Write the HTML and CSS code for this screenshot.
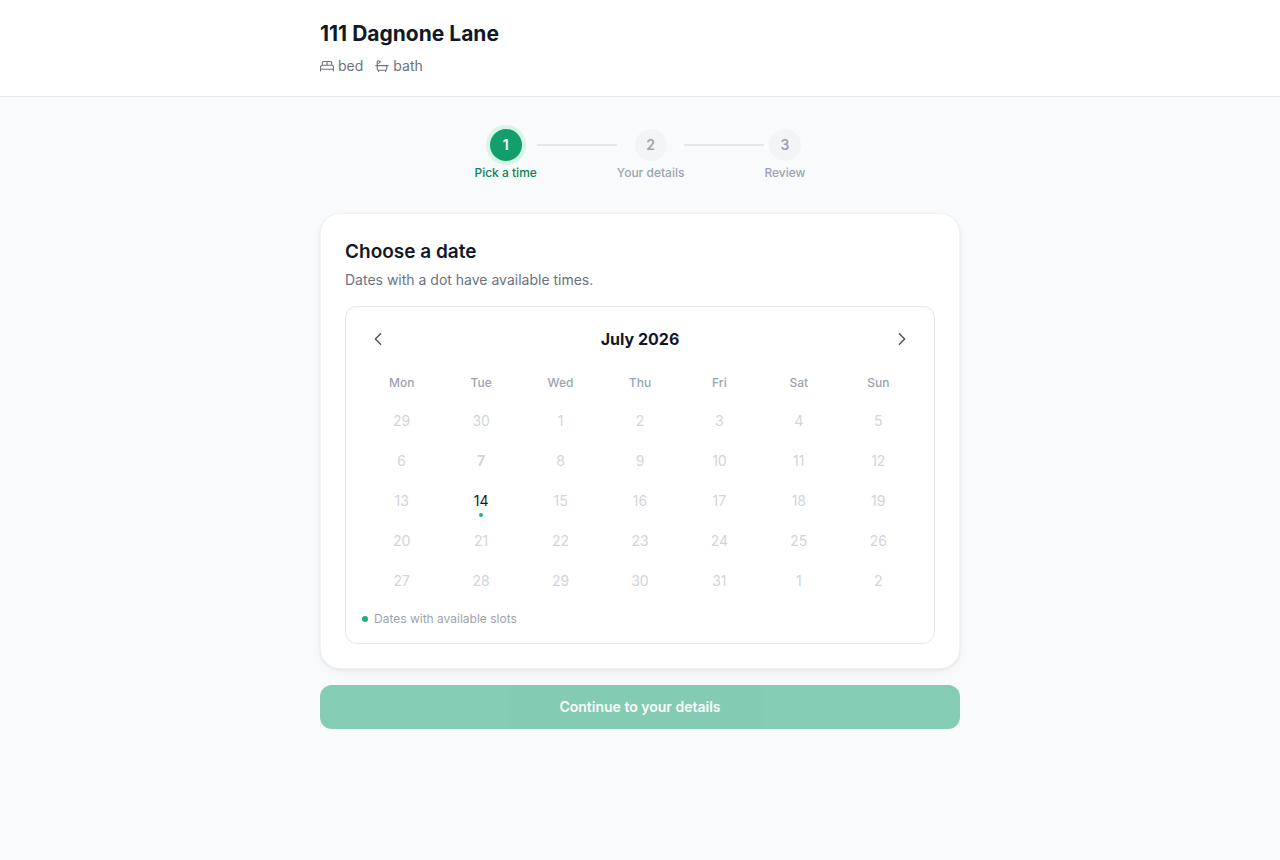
FILE: index.html
```
<!DOCTYPE html>
<html lang="en">
<head>
  <meta charset="UTF-8">
  <meta name="viewport" content="width=device-width, initial-scale=1.0">
  <title>111 Dagnone Lane</title>
  <link rel="stylesheet" href="styles.css">
</head>
<body>
  <header class="site-header">
    <div class="container">
      <h1 class="property-title">111 Dagnone Lane</h1>
      <div class="property-meta">
        <span class="meta-item">
          <svg class="meta-icon" viewBox="0 0 14 14" aria-hidden="true">
            <path d="M.6 12V7.8A1.5 1.5 0 0 1 2.1 6.3h9.8a1.5 1.5 0 0 1 1.5 1.5V12M.6 10.3h12.8M2.3 6.3V3.7a1.2 1.2 0 0 1 1.2-1.2h7a1.2 1.2 0 0 1 1.2 1.2v2.6M7 2.5v3.8"/>
          </svg>
          bed
        </span>
        <span class="meta-item">
          <svg class="meta-icon" viewBox="0 0 14 14" aria-hidden="true">
            <path d="M.8 6.6h12.4M2.2 6.6V2.8a1.1 1.1 0 0 1 2-.6l.6.8M3.7 4.3l1.8-1.6M2.2 6.6v3.2a1.5 1.5 0 0 0 1.5 1.5h6.6a1.5 1.5 0 0 0 1.5-1.5V6.6M3.5 11.3v1.2M10.5 11.3v1.2"/>
          </svg>
          bath
        </span>
      </div>
    </div>
  </header>

  <main class="container booking">
    <ol class="steps">
      <li class="step active" aria-current="step">
        <span class="step-number">1</span>
        <span class="step-label">Pick a time</span>
      </li>
      <li class="step-line" aria-hidden="true"></li>
      <li class="step">
        <span class="step-number">2</span>
        <span class="step-label">Your details</span>
      </li>
      <li class="step-line" aria-hidden="true"></li>
      <li class="step">
        <span class="step-number">3</span>
        <span class="step-label">Review</span>
      </li>
    </ol>

    <section class="card">
      <h2 class="card-title">Choose a date</h2>
      <p class="card-text">Dates with a dot have available times.</p>

      <div class="calendar">
        <div class="calendar-header">
          <button class="nav-button" type="button" aria-label="Previous month">
            <svg viewBox="0 0 24 24"><path d="M15.5 19l-7-7 7-7"/></svg>
          </button>
          <h3 class="month">July 2026</h3>
          <button class="nav-button" type="button" aria-label="Next month">
            <svg viewBox="0 0 24 24"><path d="M8.5 5l7 7-7 7"/></svg>
          </button>
        </div>

        <table class="days">
          <thead>
            <tr><th>Mon</th><th>Tue</th><th>Wed</th><th>Thu</th><th>Fri</th><th>Sat</th><th>Sun</th></tr>
          </thead>
          <tbody>
            <tr>
              <td><button class="day" disabled>29</button></td>
              <td><button class="day" disabled>30</button></td>
              <td><button class="day" disabled>1</button></td>
              <td><button class="day" disabled>2</button></td>
              <td><button class="day" disabled>3</button></td>
              <td><button class="day" disabled>4</button></td>
              <td><button class="day" disabled>5</button></td>
            </tr>
            <tr>
              <td><button class="day" disabled>6</button></td>
              <td><button class="day today" disabled>7</button></td>
              <td><button class="day" disabled>8</button></td>
              <td><button class="day" disabled>9</button></td>
              <td><button class="day" disabled>10</button></td>
              <td><button class="day" disabled>11</button></td>
              <td><button class="day" disabled>12</button></td>
            </tr>
            <tr>
              <td><button class="day" disabled>13</button></td>
              <td><button class="day available" type="button">14</button></td>
              <td><button class="day" disabled>15</button></td>
              <td><button class="day" disabled>16</button></td>
              <td><button class="day" disabled>17</button></td>
              <td><button class="day" disabled>18</button></td>
              <td><button class="day" disabled>19</button></td>
            </tr>
            <tr>
              <td><button class="day" disabled>20</button></td>
              <td><button class="day" disabled>21</button></td>
              <td><button class="day" disabled>22</button></td>
              <td><button class="day" disabled>23</button></td>
              <td><button class="day" disabled>24</button></td>
              <td><button class="day" disabled>25</button></td>
              <td><button class="day" disabled>26</button></td>
            </tr>
            <tr>
              <td><button class="day" disabled>27</button></td>
              <td><button class="day" disabled>28</button></td>
              <td><button class="day" disabled>29</button></td>
              <td><button class="day" disabled>30</button></td>
              <td><button class="day" disabled>31</button></td>
              <td><button class="day" disabled>1</button></td>
              <td><button class="day" disabled>2</button></td>
            </tr>
          </tbody>
        </table>

        <div class="legend">
          <span class="legend-dot"></span>
          <span>Dates with available slots</span>
        </div>
      </div>
    </section>

    <button class="continue-button" type="button" disabled>Continue to your details</button>
  </main>
</body>
</html>
```
FILE: styles.css
```
* {
  box-sizing: border-box;
}

body {
  margin: 0;
  font-family: Inter, "Liberation Sans", sans-serif;
  font-size: 14px;
  line-height: 20px;
  color: #111827;
  background-color: #f9fafc;
}

h1, h2, h3, p, ol {
  margin: 0;
  padding: 0;
}

button {
  font: inherit;
  border: 0;
  padding: 0;
  background: none;
  cursor: pointer;
}

button:disabled {
  cursor: default;
}

.container {
  width: 100%;
  max-width: 672px;
  margin: 0 auto;
  padding: 0 16px;
}

.site-header {
  padding: 20px 0;
  background-color: #fff;
  border-bottom: 1px solid #e5e7eb;
}

.property-title {
  font-size: 21px;
  line-height: 28px;
  font-weight: 700;
}

.property-meta {
  display: flex;
  gap: 12px;
  margin-top: 8px;
  color: #6b7280;
}

.meta-item {
  display: flex;
  align-items: center;
  gap: 4px;
}

.meta-icon {
  width: 14px;
  height: 14px;
  fill: none;
  stroke: currentColor;
  stroke-width: 1.1;
  stroke-linecap: round;
  stroke-linejoin: round;
}

.booking {
  padding-top: 32px;
  padding-bottom: 32px;
}

/* Steps */
.steps {
  display: flex;
  justify-content: center;
  align-items: flex-start;
  margin-bottom: 32px;
  list-style: none;
}

.step {
  display: flex;
  flex-direction: column;
  align-items: center;
  gap: 4px;
  color: #9ca3af;
}

.step-number {
  display: flex;
  align-items: center;
  justify-content: center;
  width: 32px;
  height: 32px;
  border-radius: 50%;
  font-weight: 600;
  background-color: #f3f4f6;
}

.step-label {
  font-size: 12px;
  line-height: 16px;
  font-weight: 500;
}

.step.active {
  color: #0b8259;
}

.step.active .step-number {
  color: #fff;
  background-color: #129f6b;
  box-shadow: 0 0 0 4px #d6f6e7;
}

.step-line {
  width: 80px;
  height: 2px;
  margin-top: 15px;
  background-color: #e5e7eb;
}

/* Date card */
.card {
  padding: 24px;
  border: 1px solid #f1f2f4;
  border-radius: 20px;
  background-color: #fff;
  box-shadow: 0 1px 3px rgba(0, 0, 0, 0.06), 0 4px 12px rgba(0, 0, 0, 0.04);
}

.card-title {
  font-size: 19px;
  line-height: 28px;
  font-weight: 600;
}

.card-text {
  margin-top: 4px;
  color: #6b7280;
}

.calendar {
  margin-top: 16px;
  padding: 16px;
  border: 1px solid #e5e7eb;
  border-radius: 12px;
}

.calendar-header {
  display: flex;
  align-items: center;
  justify-content: space-between;
  margin-bottom: 16px;
}

.month {
  font-size: 16px;
  line-height: 24px;
  font-weight: 700;
}

.nav-button {
  display: flex;
  align-items: center;
  justify-content: center;
  width: 32px;
  height: 32px;
  border-radius: 8px;
  color: #4b5563;
}

.nav-button svg {
  width: 18px;
  height: 18px;
  fill: none;
  stroke: currentColor;
  stroke-width: 2;
  stroke-linecap: round;
  stroke-linejoin: round;
}

.days {
  width: 100%;
  table-layout: fixed;
  border-collapse: collapse;
}

.days th {
  padding: 4px 0 10px;
  font-size: 12px;
  line-height: 16px;
  font-weight: 500;
  color: #9ca3af;
}

.days td {
  padding: 2px 0;
  text-align: center;
}

.day {
  position: relative;
  display: block;
  width: 36px;
  height: 36px;
  margin: 0 auto;
  border-radius: 8px;
  color: #111827;
}

.day:disabled {
  color: #d1d5db;
}

.day.today {
  font-weight: 700;
}

.day.available::after {
  content: '';
  position: absolute;
  bottom: 2px;
  left: 16px;
  width: 4px;
  height: 4px;
  border-radius: 50%;
  background-color: #1fb080;
}

.legend {
  display: flex;
  align-items: center;
  gap: 6px;
  margin-top: 10px;
  font-size: 12px;
  line-height: 16px;
  color: #9ca3af;
}

.legend-dot {
  width: 6px;
  height: 6px;
  border-radius: 50%;
  background-color: #1fb080;
}

.continue-button {
  width: 100%;
  margin-top: 16px;
  padding: 12px 24px;
  border-radius: 12px;
  font-weight: 600;
  color: #fff;
  background-color: #0f9e6a;
}

.continue-button:disabled {
  opacity: 0.5;
}
```
